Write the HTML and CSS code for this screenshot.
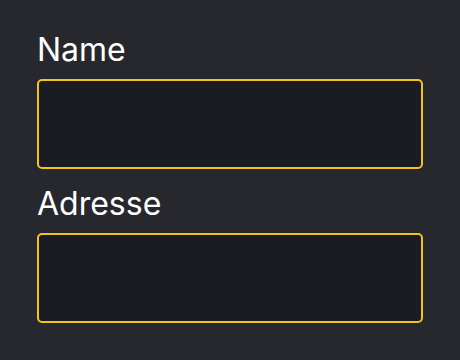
FILE: index.html
```html
<!DOCTYPE html>
<html lang="en">
<head>
    <meta charset="UTF-8">
    <meta name="viewport" content="width=device-width, initial-scale=1.0">
    <title>Form</title>
    <link rel="stylesheet" href="styles.css">
</head>
<body>
    <form class="form">
        <div class="field">
            <label class="label" for="name">Name</label>
            <input class="input" id="name" type="text">
        </div>
        <div class="field">
            <label class="label" for="adresse">Adresse</label>
            <input class="input" id="adresse" type="text">
        </div>
    </form>
</body>
</html>
```

FILE: styles.css
```css
body {
    margin: 0;
    padding: 0;
    background-color: #27282e;
    font-family: Inter, "Noto Sans", sans-serif;
}
.form {
    padding: 29px 37px 0 37px;
    display: flex;
    flex-direction: column;
    gap: 14px;
}
.field {
    display: flex;
    flex-direction: column;
    gap: 8px;
}
.label {
    color: #ffffff;
    font-size: 32px;
    line-height: 42px;
}
.input {
    height: 90px;
    box-sizing: border-box;
    margin: 0;
    border: 2px solid #f2c31d;
    border-radius: 5px;
    background-color: #1b1c23;
    color: #ffffff;
    font-size: 20px;
    outline: none;
}
```
